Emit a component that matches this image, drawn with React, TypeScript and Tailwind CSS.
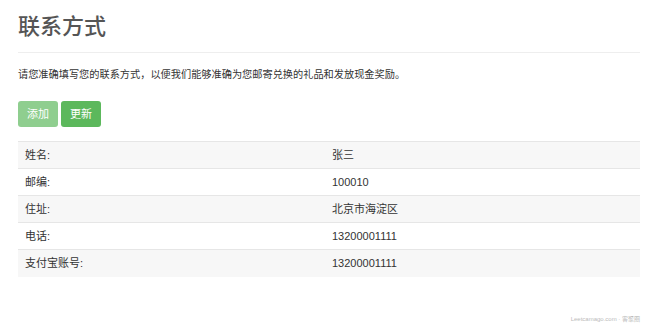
import React from 'react';

const rows = [
  { label: '姓名:', value: '张三' },
  { label: '邮编:', value: '100010' },
  { label: '住址:', value: '北京市海淀区' },
  { label: '电话:', value: '13200001111' },
  { label: '支付宝账号:', value: '13200001111' },
];

export default function App() {
  return (
    <div
      className="w-[650px] h-[327px] bg-white relative overflow-hidden text-[#333]"
      style={{ fontFamily: '"Helvetica Neue", "Liberation Sans", "Noto Sans CJK SC", sans-serif' }}
    >
      <div className="pl-[18px] pr-[10px] pt-[12px]">
        <h1 className="text-[22px] leading-[30px] font-medium text-[#555]">联系方式</h1>
        <div className="mt-[10px] border-t border-[#eeeeee]" />
        <p className="mt-[14px] text-[10.2px] leading-[16px] text-[#333]">
          请您准确填写您的联系方式，以便我们能够准确为您邮寄兑换的礼品和发放现金奖励。
        </p>
        <div className="mt-[18px] flex gap-[3px]">
          <button className="w-[40px] h-[26px] rounded-[3px] bg-[#8fce8f] text-white text-[11px]">添加</button>
          <button className="w-[40px] h-[26px] rounded-[3px] bg-[#5cb85c] text-white text-[11px]">更新</button>
        </div>
        <table className="mt-[14px] w-full text-[11px] text-[#333] border-collapse">
          <tbody>
            {rows.map((r, i) => (
              <tr key={r.label} className={`h-[27px] border-t border-[#e6e6e6] ${i % 2 === 0 ? 'bg-[#f7f7f7]' : 'bg-white'}`}>
                <td className="w-[314px] pl-[7px] align-middle">{r.label}</td>
                <td className="align-middle">{r.value}</td>
              </tr>
            ))}
          </tbody>
        </table>
      </div>
      <div className="absolute right-[10px] bottom-[3px] text-[6px] text-[#bbb]">Leetcamago.com · 客聚圈</div>
    </div>
  );
}
